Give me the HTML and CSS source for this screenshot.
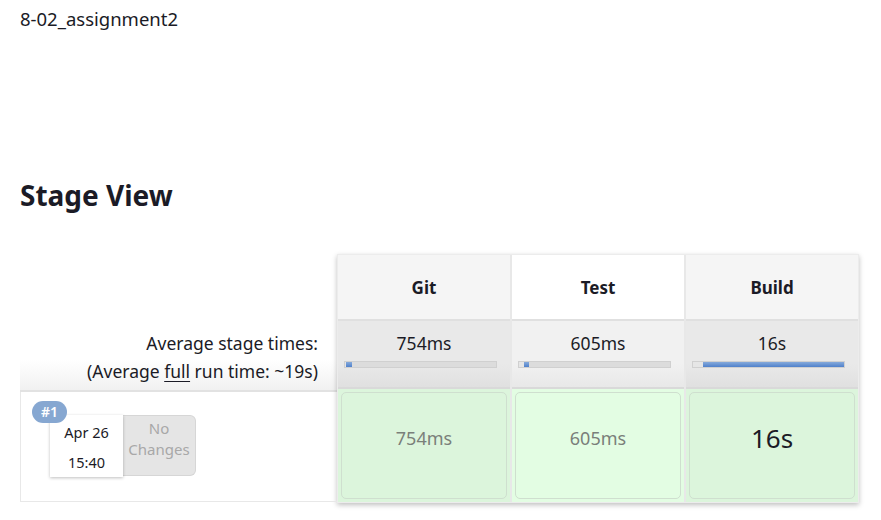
FILE: index.html
```html
<!DOCTYPE html>
<html>
<head>
<meta charset="utf-8">
<link rel="stylesheet" href="styles.css">
</head>
<body>
<div class="job-name">8-02_assignment2</div>
<h2 class="title">Stage View</h2>
<div class="stage-view">
  <div class="left">
    <div class="left-head"></div>
    <div class="left-avg">
      <div>Average stage times:</div>
      <div>(Average <u>full</u> run time: ~19s)</div>
    </div>
    <div class="left-build">
      <span class="badge">#1</span>
      <div class="build-info">
        <div class="date-card">
          <div>Apr 26</div>
          <div>15:40</div>
        </div>
        <div class="changes">No<br>Changes</div>
      </div>
    </div>
  </div>
  <div class="stages">
    <div class="col">
      <div class="head">Git</div>
      <div class="avg">
        <div class="avg-time">754ms</div>
        <div class="bar"><div class="pre" style="width:1px"></div><div class="fill" style="width:6px"></div></div>
      </div>
      <div class="cell-wrap"><div class="cell">754ms</div></div>
    </div>
    <div class="col alt">
      <div class="head">Test</div>
      <div class="avg">
        <div class="avg-time">605ms</div>
        <div class="bar"><div class="pre" style="width:5px"></div><div class="fill" style="width:5px"></div></div>
      </div>
      <div class="cell-wrap"><div class="cell">605ms</div></div>
    </div>
    <div class="col">
      <div class="head">Build</div>
      <div class="avg">
        <div class="avg-time">16s</div>
        <div class="bar"><div class="pre" style="width:10px"></div><div class="fill" style="width:142px"></div></div>
      </div>
      <div class="cell-wrap"><div class="cell big">16s</div></div>
    </div>
  </div>
</div>
</body>
</html>
```

FILE: styles.css
```css
html, body {
  margin: 0;
  padding: 0;
  background: #fff;
}
body {
  font-family: "Noto Sans", "DejaVu Sans", sans-serif;
  color: #1b1b26;
  padding: 8px 20px;
}
.job-name {
  font-size: 18.5px;
  line-height: 22px;
}
.title {
  font-size: 28px;
  font-weight: 700;
  margin: 145px 0 0 0;
  line-height: 40px;
  color: #1b1b26;
}
.stage-view {
  display: flex;
  margin-top: 41px;
}
.left {
  width: 317px;
  display: flex;
  flex-direction: column;
}
.left-head {
  height: 67px;
}
.left-avg {
  height: 69px;
  text-align: right;
  padding-right: 19px;
  font-size: 17.5px;
  line-height: 28px;
  box-sizing: border-box;
  padding-top: 6px;
  background: linear-gradient(#fff 55%, #f1f1f1);
  border-bottom: 2px solid #e2e2e2;
}
.left-avg u {
  text-decoration-thickness: 1px;
  text-underline-offset: 3px;
}
.left-build {
  position: relative;
  height: 110px;
  box-sizing: border-box;
  border-left: 1px solid #e8e8e8;
  border-bottom: 1px solid #e8e8e8;
  padding: 23px 0 0 29px;
}
.badge {
  position: absolute;
  left: 11px;
  top: 9px;
  background: #86a7d1;
  color: #fff;
  font-size: 14px;
  font-weight: 600;
  line-height: 22px;
  padding: 0 9px;
  border-radius: 11px;
  z-index: 2;
}
.build-info {
  display: flex;
}
.date-card {
  width: 73px;
  height: 62px;
  background: #fff;
  box-shadow: 0 1px 3px rgba(0,0,0,0.25);
  font-size: 14.5px;
  line-height: 30px;
  text-align: center;
  padding-top: 2px;
  box-sizing: border-box;
  position: relative;
  z-index: 1;
}
.changes {
  width: 73px;
  height: 61px;
  background: #e5e5e5;
  border: 1px solid #d6d6d6;
  border-left: none;
  border-radius: 0 6px 6px 0;
  box-sizing: border-box;
  color: #a8a8a8;
  font-size: 15px;
  line-height: 21px;
  text-align: center;
  padding-top: 2px;
}
.stages {
  display: flex;
  margin-top: -2px;
  box-shadow: 0 2px 5px rgba(0,0,0,0.25);
  background: #e8e8e8;
  gap: 2px;
  border: 1px solid #ececec;
  height: fit-content;
}
.col {
  width: 172px;
  display: flex;
  flex-direction: column;
}
.head {
  height: 66px;
  background: #f5f5f5;
  font-weight: 700;
  font-size: 17px;
  display: flex;
  align-items: center;
  justify-content: center;
  border-bottom: 2px solid #e0e0e0;
  box-sizing: border-box;
  padding-top: 1px;
}
.col.alt .head {
  background: #fff;
}
.avg {
  height: 68px;
  background: linear-gradient(#e9e9e9 65%, #e0e0e0);
  box-sizing: border-box;
  padding: 10px 0 0 6px;
  text-align: center;
  border-bottom: 2px solid #d9d9d9;
}
.avg-time {
  font-size: 17.5px;
  line-height: 24px;
  color: #1b1b26;
  padding-right: 6px;
}
.col.alt .avg {
  background: linear-gradient(#f1f1f1 65%, #e8e8e8);
}
.bar {
  margin-top: 6px;
  width: 153px;
  height: 7px;
  background: #dcdcdc;
  border: 1px solid #d0d0d0;
  box-sizing: border-box;
  display: flex;
}
.pre {
  height: 5px;
  background: #e6e6e6;
}
.fill {
  height: 5px;
  background: linear-gradient(#86aadb, #5081cb);
}
.cell-wrap {
  height: 113px;
  padding: 3px;
  box-sizing: border-box;
  background: #dcf5dc;
}
.col.alt .cell-wrap {
  background: #e3fde3;
}
.cell {
  height: 100%;
  border: 1px solid #cfdfcf;
  border-radius: 5px;
  box-sizing: border-box;
  display: flex;
  align-items: center;
  justify-content: center;
  padding-bottom: 16px;
  font-size: 18px;
  color: #7a7f7a;
}
.cell.big {
  font-size: 26px;
  color: #1b1b26;
}
```
